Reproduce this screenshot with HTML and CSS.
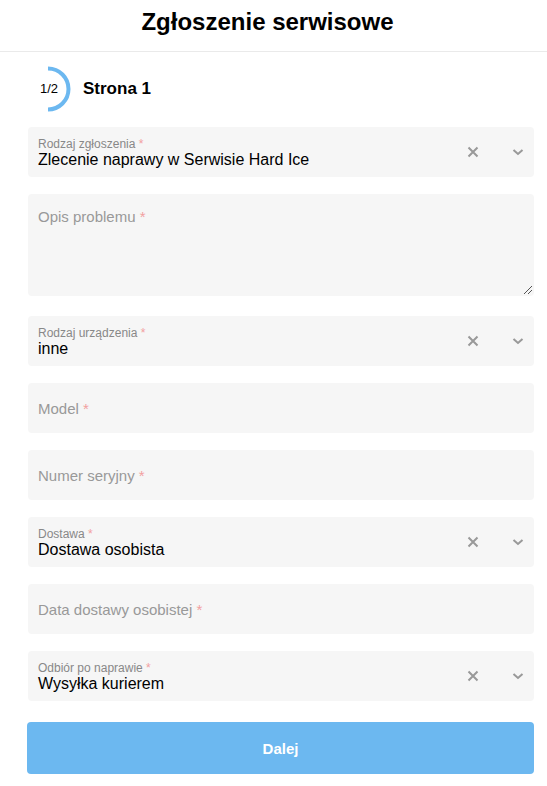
FILE: index.html
```html
<!DOCTYPE html>
<html lang="pl">
<head>
<meta charset="utf-8">
<title>Zgłoszenie serwisowe</title>
<link rel="stylesheet" href="styles.css">
</head>
<body>
<header class="header"><h1 class="title">Zgłoszenie serwisowe</h1></header>
<main class="form">
  <div class="step">
    <div class="ring">
      <svg width="44" height="46" viewBox="0 0 44 46"><path d="M20 2.5 A20.5 20.5 0 0 1 20 43.5" fill="none" stroke="#6cb8f0" stroke-width="4"/></svg>
      <span class="ring-text">1/2</span>
    </div>
    <span class="step-title">Strona 1</span>
  </div>

  <div class="field select">
    <div class="content"><div class="label">Rodzaj zgłoszenia <span class="req">*</span></div><div class="value">Zlecenie naprawy w Serwisie Hard Ice</div></div>
    <span class="clear"><svg width="12" height="12" viewBox="0 0 12 12"><path d="M1.5 1.5 L10.5 10.5 M10.5 1.5 L1.5 10.5" stroke="#999" stroke-width="2"/></svg></span><span class="chev"><svg width="12" height="8" viewBox="0 0 12 8"><path d="M1.5 2 L6 6 L10.5 2" fill="none" stroke="#999" stroke-width="2"/></svg></span>
  </div>

  <div class="field area">
    <div class="placeholder">Opis problemu <span class="req">*</span></div>
    <svg class="grip" width="10" height="10" viewBox="0 0 10 10"><path d="M9 1 L1 9 M9 5 L5 9" stroke="#555" stroke-width="1"/></svg>
  </div>

  <div class="field select gap-lg">
    <div class="content"><div class="label">Rodzaj urządzenia <span class="req">*</span></div><div class="value">inne</div></div>
    <span class="clear"><svg width="12" height="12" viewBox="0 0 12 12"><path d="M1.5 1.5 L10.5 10.5 M10.5 1.5 L1.5 10.5" stroke="#999" stroke-width="2"/></svg></span><span class="chev"><svg width="12" height="8" viewBox="0 0 12 8"><path d="M1.5 2 L6 6 L10.5 2" fill="none" stroke="#999" stroke-width="2"/></svg></span>
  </div>

  <div class="field input"><div class="placeholder">Model <span class="req">*</span></div></div>
  <div class="field input"><div class="placeholder">Numer seryjny <span class="req">*</span></div></div>

  <div class="field select">
    <div class="content"><div class="label">Dostawa <span class="req">*</span></div><div class="value">Dostawa osobista</div></div>
    <span class="clear"><svg width="12" height="12" viewBox="0 0 12 12"><path d="M1.5 1.5 L10.5 10.5 M10.5 1.5 L1.5 10.5" stroke="#999" stroke-width="2"/></svg></span><span class="chev"><svg width="12" height="8" viewBox="0 0 12 8"><path d="M1.5 2 L6 6 L10.5 2" fill="none" stroke="#999" stroke-width="2"/></svg></span>
  </div>

  <div class="field input"><div class="placeholder">Data dostawy osobistej <span class="req">*</span></div></div>

  <div class="field select">
    <div class="content"><div class="label">Odbiór po naprawie <span class="req">*</span></div><div class="value">Wysyłka kurierem</div></div>
    <span class="clear"><svg width="12" height="12" viewBox="0 0 12 12"><path d="M1.5 1.5 L10.5 10.5 M10.5 1.5 L1.5 10.5" stroke="#999" stroke-width="2"/></svg></span><span class="chev"><svg width="12" height="8" viewBox="0 0 12 8"><path d="M1.5 2 L6 6 L10.5 2" fill="none" stroke="#999" stroke-width="2"/></svg></span>
  </div>

  <button class="btn">Dalej</button>
</main>
</body>
</html>
```
FILE: styles.css
```css
* { box-sizing: border-box; }
body { margin: 0; font-family: "Liberation Sans", Arial, sans-serif; color: #000; background: #fff; }
.header { height: 52px; border-bottom: 1px solid #eaeaea; display: flex; align-items: center; justify-content: center; padding-right: 12px; }
.title { margin: 0; font-size: 24px; font-weight: bold; position: relative; top: -4px; }
.form { padding: 14px 13px 0 28px; display: flex; flex-direction: column; }
.step { display: flex; align-items: center; height: 46px; margin-bottom: 15px; }
.ring { position: relative; width: 44px; height: 46px; }
.ring svg { position: absolute; left: 0; top: 0; }
.ring-text { position: absolute; left: 12px; top: 15px; font-size: 13px; }
.step-title { font-size: 17px; font-weight: bold; margin-left: 11px; }
.field { background: #f6f6f6; border-radius: 4px; width: 506px; margin-bottom: 17px; position: relative; }
.select, .input { height: 50px; display: flex; align-items: center; }
.select { padding-left: 10px; }
.content { flex: 1; padding-top: 1px; }
.label { font-size: 12px; color: #888; line-height: 14px; }
.value { font-size: 16px; line-height: 18px; }
.req { color: #f2a0a0; }
.clear { width: 12px; margin-right: 33px; display: flex; }
.chev { width: 12px; margin-right: 10px; display: flex; }
.input { padding-left: 10px; }
.placeholder { font-size: 15px; color: #999; }
.area { height: 102px; padding: 14px 10px; }
.grip { position: absolute; right: 1px; bottom: 1px; }
.gap-lg { margin-top: 3px; }
.btn { margin-top: 4px; width: 507px; margin-left: -1px; height: 52px; border: none; border-radius: 4px; background: #6cb8f0; color: #fff; font-family: inherit; font-size: 15px; font-weight: bold; }
```
